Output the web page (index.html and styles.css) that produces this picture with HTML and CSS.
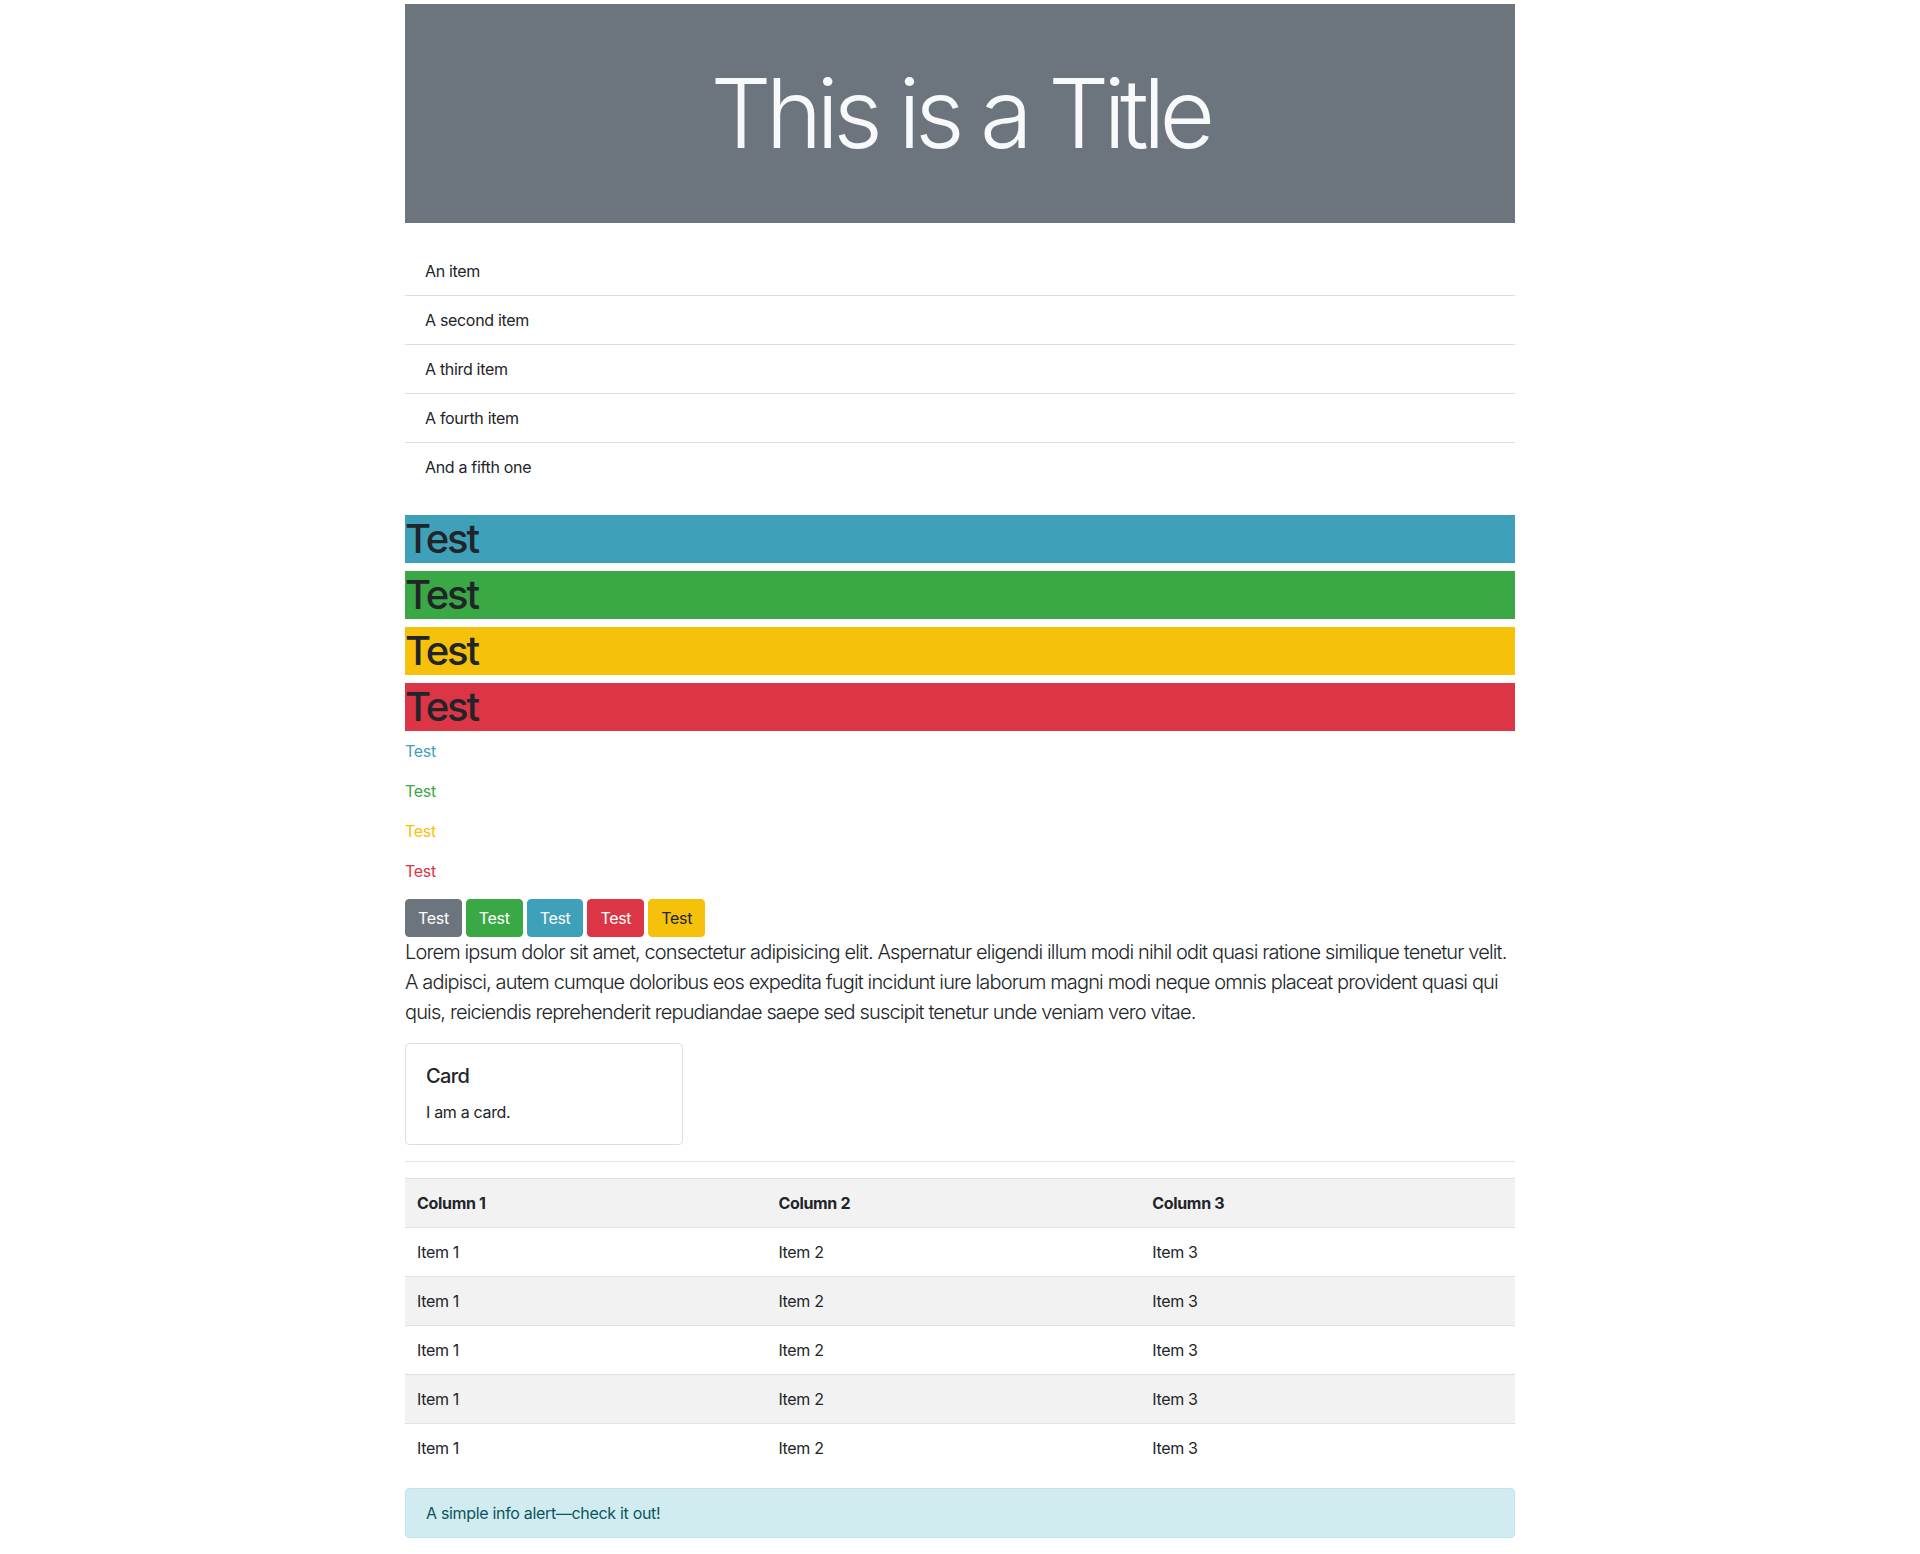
FILE: index.html
```html
<!DOCTYPE html>
<html lang="en">
<head>
<meta charset="utf-8">
<title>Test page</title>
<link rel="stylesheet" href="styles.css">
</head>
<body>
<div class="container">
  <header class="hero">
    <h1 class="hero-title">This is a Title</h1>
  </header>

  <ul class="list">
    <li class="list-item">An item</li>
    <li class="list-item">A second item</li>
    <li class="list-item">A third item</li>
    <li class="list-item">A fourth item</li>
    <li class="list-item">And a fifth one</li>
  </ul>

  <h1 class="bar bg-info">Test</h1>
  <h1 class="bar bg-success">Test</h1>
  <h1 class="bar bg-warning">Test</h1>
  <h1 class="bar bg-danger">Test</h1>

  <p class="colored text-info">Test</p>
  <p class="colored text-success">Test</p>
  <p class="colored text-warning">Test</p>
  <p class="colored text-danger">Test</p>

  <div class="buttons">
    <button class="btn btn-secondary">Test</button>
    <button class="btn btn-success">Test</button>
    <button class="btn btn-info">Test</button>
    <button class="btn btn-danger">Test</button>
    <button class="btn btn-warning">Test</button>
  </div>

  <p class="lead">Lorem ipsum dolor sit amet, consectetur adipisicing elit. Aspernatur eligendi illum modi nihil odit quasi ratione similique tenetur velit. A adipisci, autem cumque doloribus eos expedita fugit incidunt iure laborum magni modi neque omnis placeat provident quasi qui quis, reiciendis reprehenderit repudiandae saepe sed suscipit tenetur unde veniam vero vitae.</p>

  <div class="card">
    <h5 class="card-title">Card</h5>
    <p class="card-text">I am a card.</p>
  </div>

  <hr class="divider">

  <table class="table">
    <tbody>
      <tr><th>Column 1</th><th>Column 2</th><th>Column 3</th></tr>
      <tr><td>Item 1</td><td>Item 2</td><td>Item 3</td></tr>
      <tr><td>Item 1</td><td>Item 2</td><td>Item 3</td></tr>
      <tr><td>Item 1</td><td>Item 2</td><td>Item 3</td></tr>
      <tr><td>Item 1</td><td>Item 2</td><td>Item 3</td></tr>
      <tr><td>Item 1</td><td>Item 2</td><td>Item 3</td></tr>
    </tbody>
  </table>

  <div class="alert">A simple info alert—check it out!</div>
</div>
</body>
</html>
```

FILE: styles.css
```css
* { box-sizing: border-box; }

body {
  margin: 0;
  font-family: Inter, "Noto Sans", "Liberation Sans", sans-serif;
  font-size: 16px;
  line-height: 1.5;
  letter-spacing: -0.02em;
  color: #212529;
  background: #fff;
}

.container {
  width: 1110px;
  margin: 0 auto;
  padding-top: 4px;
}

.hero {
  background: #6c757d;
  height: 219px;
  display: flex;
  align-items: center;
  justify-content: center;
}

.hero-title {
  margin: 0;
  color: #f8f9fa;
  font-size: 96px;
  font-weight: 300;
  line-height: 1.2;
  letter-spacing: -0.06em;
}

.list {
  list-style: none;
  margin: 24px 0 24px;
  padding: 0;
}

.list-item {
  padding: 12px 20px;
  border-bottom: 1px solid rgba(0, 0, 0, 0.125);
}

.list-item:last-child { border-bottom: 0; }

.bar {
  margin: 0 0 8px;
  font-size: 40px;
  font-weight: 500;
  line-height: 1.2;
  letter-spacing: -0.055em;
  color: #212529;
}

.bg-info { background: #3ea1b9; }
.bg-success { background: #3aa845; }
.bg-warning { background: #f6c10b; }
.bg-danger { background: #dc3545; }

.colored { margin: 0 0 16px; }
.text-info { color: #3ea1b9; }
.text-success { color: #3aa845; }
.text-warning { color: #f6c10b; }
.text-danger { color: #dc3545; }

.buttons {
  display: flex;
  gap: 4px;
}

.btn {
  font-family: inherit;
  font-size: 16px;
  line-height: 24px;
  letter-spacing: -0.02em;
  padding: 6px 12px;
  border: 1px solid transparent;
  border-radius: 4px;
  color: #fff;
  cursor: pointer;
}

.btn-secondary { background: #6c757d; border-color: #6c757d; }
.btn-success { background: #3aa845; border-color: #3aa845; }
.btn-info { background: #3ea1b9; border-color: #3ea1b9; }
.btn-danger { background: #dc3545; border-color: #dc3545; }
.btn-warning { background: #f6c10b; border-color: #f6c10b; color: #212529; }

.lead {
  margin: 0 0 16px;
  font-size: 20px;
  font-weight: 300;
  line-height: 1.5;
  letter-spacing: -0.043em;
}

.card {
  width: 278px;
  border: 1px solid rgba(0, 0, 0, 0.125);
  border-radius: 4px;
  padding: 20px;
}

.card-title {
  margin: 0 0 12px;
  font-size: 20px;
  font-weight: 500;
  line-height: 1.2;
  letter-spacing: -0.03em;
}

.card-text { margin: 0; }

.divider {
  margin: 16px 0;
  border: 0;
  border-top: 1px solid rgba(0, 0, 0, 0.1);
}

.table {
  width: 100%;
  border-collapse: collapse;
  margin-bottom: 16px;
}

.table th,
.table td {
  padding: 12px;
  text-align: left;
  vertical-align: top;
  border-top: 1px solid #dee2e6;
}

.table th { font-weight: 700; }

.table tr:nth-child(odd) { background: rgba(0, 0, 0, 0.05); }

.alert {
  padding: 12px 20px;
  border: 1px solid #bee5eb;
  border-radius: 4px;
  background: #d1ecf1;
  color: #0c5460;
}
```
